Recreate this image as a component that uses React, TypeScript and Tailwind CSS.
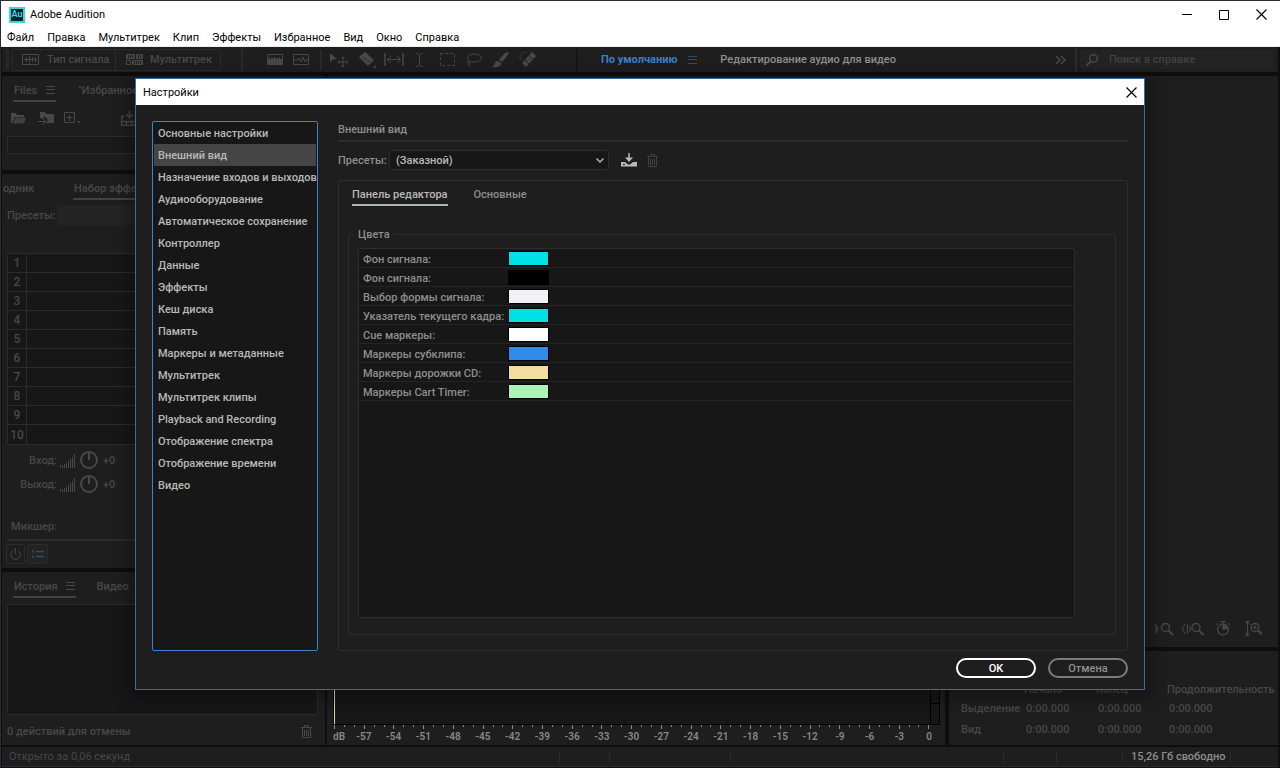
import { useState } from "react";
import type { ReactNode } from "react";
import clsx from "clsx";

const menuItems = ["Файл", "Правка", "Мультитрек", "Клип", "Эффекты", "Избранное", "Вид", "Окно", "Справка"];

const sections = [
  "Основные настройки",
  "Внешний вид",
  "Назначение входов и выходов",
  "Аудиооборудование",
  "Автоматическое сохранение",
  "Контроллер",
  "Данные",
  "Эффекты",
  "Кеш диска",
  "Память",
  "Маркеры и метаданные",
  "Мультитрек",
  "Мультитрек клипы",
  "Playback and Recording",
  "Отображение спектра",
  "Отображение времени",
  "Видео",
];

const colors = [
  { id: "wave", label: "Фон сигнала:", value: "#00e1e6" },
  { id: "wave-bg", label: "Фон сигнала:", value: "#000000" },
  { id: "selection", label: "Выбор формы сигнала:", value: "#f2f2f6" },
  { id: "playhead", label: "Указатель текущего кадра:", value: "#00e1e6" },
  { id: "cue", label: "Cue маркеры:", value: "#ffffff" },
  { id: "subclip", label: "Маркеры субклипа:", value: "#2f8ceb" },
  { id: "cd", label: "Маркеры дорожки CD:", value: "#f3dca2" },
  { id: "cart", label: "Маркеры Cart Timer:", value: "#adf3b6" },
];

const slots = [1, 2, 3, 4, 5, 6, 7, 8, 9, 10];
const levels = Array.from({ length: 20 }, (_, i) => -57 + i * 3);
const ticks = Array.from({ length: 61 }, (_, i) => i);

interface IconProps {
  w: number;
  h: number;
  className?: string;
  children: ReactNode;
}

function Icon({ w, h, className, children }: IconProps) {
  return (
    <svg width={w} height={h} viewBox={`0 0 ${w} ${h}`} fill="none" stroke="currentColor" className={clsx("shrink-0", className)} aria-hidden="true">
      {children}
    </svg>
  );
}

function Lines({ className }: { className?: string }) {
  return (
    <Icon w={9} h={8} className={className}>
      <path d="M0 .5h9M0 3.5h9M0 7.5h9" />
    </Icon>
  );
}

function Cross() {
  return (
    <Icon w={11} h={11}>
      <path d="M.5.5l10 10M10.5.5l-10 10" strokeWidth="1.2" />
    </Icon>
  );
}

function Trash() {
  return (
    <Icon w={11} h={13}>
      <path d="M0 2.5h11M3.5 2V.5h4V2M1.5 3v9.5h8V3M3.5 5v6M5.5 5v6M7.5 5v6" />
    </Icon>
  );
}

function WaveIcon() {
  return (
    <Icon w={17} h={11}>
      <path d="M.5.5h16v10H.5zM2 5.5h13M4.5 3v5M7.5 2v7M10.5 3v5M13.5 3v5" />
    </Icon>
  );
}

function MultitrackIcon() {
  return (
    <Icon w={17} h={11}>
      <path d="M.5.5h8v4h-8zM10.5.5h6v4h-6zM.5 6.5h4v4h-4zM6.5 6.5h10v4h-10z" />
      <path d="M1 2.5h8M11 2.5h5M7 8.5h9" strokeDasharray="1 1" strokeWidth="3" />
    </Icon>
  );
}

function Magnifier() {
  return (
    <Icon w={12} h={12}>
      <circle cx="7.5" cy="4.5" r="3.8" strokeWidth="1.5" />
      <path d="M4.8 7.2L.6 11.4" strokeWidth="2" />
    </Icon>
  );
}

function Bars() {
  return (
    <Icon w={15} h={15}>
      <path d="M.5 12v3M2.5 12v3M4.5 11v4M6.5 10v5M8.5 8v7M10.5 6v9M12.5 4v11M14.5 1v14" />
    </Icon>
  );
}

function Knob() {
  return (
    <Icon w={18} h={18}>
      <circle cx="9" cy="9" r="8" strokeWidth="2" />
      <path d="M9 2v7" strokeWidth="2" />
    </Icon>
  );
}

function TitleBar() {
  return (
    <header className="bg-white text-black">
      <div className="flex h-[27px] items-center pl-2">
        <div className="flex h-4 w-4 items-center justify-center border-2 border-[#3fd5dc] bg-[#08272b] text-[9px] leading-none font-semibold text-[#4fd8e4]">
          Au
        </div>
        <h1 className="ml-[5px]">Adobe Audition</h1>
        <div className="ml-auto flex items-center gap-[27px] pr-[13px]">
          <button type="button" aria-label="Свернуть">
            <Icon w={10} h={11}>
              <path d="M0 5.5h10" />
            </Icon>
          </button>
          <button type="button" aria-label="Развернуть">
            <Icon w={10} h={10}>
              <path d="M.5.5h9v9h-9z" />
            </Icon>
          </button>
          <button type="button" aria-label="Закрыть">
            <Cross />
          </button>
        </div>
      </div>
      <nav className="flex h-[19px] items-center gap-[13px] border-b border-[#eeeeee] pl-1.5">
        {menuItems.map((item) => (
          <button type="button" key={item}>
            {item}
          </button>
        ))}
      </nav>
    </header>
  );
}

function Toolbar() {
  return (
    <div className="flex h-[25px] items-center bg-[#1e1e1e] font-medium">
      <div className="ml-1 h-5 w-[3px] bg-[repeating-linear-gradient(#303030_0_1px,transparent_1px_2px)]" />
      <div className="ml-[3px] flex h-[22px] shrink-0 rounded-xs border border-[#2b2b2b]">
        <button type="button" className="flex w-[102px] items-center gap-2 pl-[9px] whitespace-nowrap">
          <WaveIcon />
          Тип сигнала
        </button>
        <button type="button" className="flex w-[105px] items-center gap-[7px] border-l border-[#2b2b2b] pl-[10px]">
          <MultitrackIcon />
          Мультитрек
        </button>
      </div>
      <div className="ml-[20px] h-full w-0.5 bg-[#2a2a2a]" />
      <div className="ml-[24px] flex items-center gap-[10px]">
        <Icon w={16} h={11}>
          <path d="M.5.5h15v10H.5z" />
          <path d="M1 5h14v5H1zM2 3h1v3H2zM4 4h2v2H4zM7 3h1v3H7zM9 4h2v2H9zM12 3h1v3h-1z" fill="currentColor" stroke="none" />
        </Icon>
        <Icon w={16} h={11}>
          <path d="M.5.5h15v10H.5zM1 6h4l1-2 2 4 2-5 2 5 1-2h2" />
        </Icon>
      </div>
      <div className="ml-[11px] h-[20px] w-0.5 bg-[#2a2a2a]" />
      <div className="ml-[8px] flex items-center gap-2">
        <Icon w={18} h={16}>
          <path d="M0 1l7 6-4 .5-3 3z" fill="currentColor" stroke="none" />
          <path d="M13 5v10M8 10h10M11.5 6.5l1.5-1.5 1.5 1.5M11.5 13.5l1.5 1.5 1.5-1.5M9.5 8.5L8 10l1.5 1.5M16.5 8.5L18 10l-1.5 1.5" />
        </Icon>
        <Icon w={18} h={17} className="ml-0.5">
          <path d="M1 6l6-5 9 8-6 6z" fill="currentColor" stroke="none" />
          <path d="M5 6l7 5" stroke="#1e1e1e" strokeDasharray="2 1" />
          <path d="M18 14v3h-3z" fill="currentColor" stroke="none" />
        </Icon>
        <Icon w={20} h={13}>
          <path d="M1 0v13M19 0v13" strokeWidth="1.5" />
          <path d="M3 6.5h14M7 3L3.5 6.5 7 10M13 3l3.5 3.5L13 10" />
        </Icon>
        <Icon w={12} h={14} className="ml-0.5">
          <path d="M2 .5c2 0 3.500.5 3.500 2v9c0 1.500-1.500 2-3.500 2M9 .5c-2 0-3.500.5-3.500 2M9 13.500c-2 0-3.500-.5-3.500-2" />
        </Icon>
        <Icon w={16} h={14} className="ml-1.5">
          <path d="M.5.5h14v12H.5z" strokeDasharray="3 2" />
        </Icon>
        <Icon w={16} h={14} className="ml-0.5">
          <ellipse cx="8.5" cy="5" rx="7" ry="4" />
          <path d="M3 8c-2 0-2.500 3 0 3 2 0 1-3-1-2M3 11c1 1 0 2 1 2.500" />
        </Icon>
        <Icon w={17} h={16} className="ml-0.5">
          <path d="M16 0c1 0 .5 2-1 4l-5 6-3-2 5-6c1-1 2.500-2 4-2zM6 9l3 2c1 3-4 5-9 4 3-1 2-6 6-6z" fill="currentColor" stroke="none" />
        </Icon>
        <Icon w={18} h={17} className="ml-0.5">
          <path d="M1 5.500C1 2 4 .5 8 1.500M1 6c0 2 .5 3 1.500 4" strokeDasharray="1 1" />
          <path d="M3 12L13 1l4 4L7 16z" fill="currentColor" stroke="none" />
          <path d="M6 9l4 4M10 4.500l4 4" stroke="#1e1e1e" />
          <path d="M9 9.500l3-3" stroke="#1e1e1e" strokeDasharray="1 1" />
        </Icon>
      </div>
      <div className="ml-[39px] h-full w-0.5 bg-[#151515]" />
      <button type="button" className="ml-[23px] font-bold whitespace-nowrap text-[#3a7fc8]">
        По умолчанию
      </button>
      <Lines className="ml-[11px] text-[#28506f]" />
      <button type="button" className="ml-[23px] whitespace-nowrap text-[#8e8e8e]">
        Редактирование аудио для видео
      </button>
      <button type="button" className="ml-auto" aria-label="Другие рабочие среды">
        <Icon w={11} h={8}>
          <path d="M1 0l4 4-4 4M6 0l4 4-4 4" strokeWidth="1.5" />
        </Icon>
      </button>
      <div className="ml-[9px] h-full w-0.5 bg-[#2b2b2b]" />
      <label className="mr-1 ml-[3px] flex h-[19px] w-[194px] items-center gap-[11px] rounded-xs bg-[#232323] pl-1.5">
        <Magnifier />
        <input
          type="search"
          aria-label="Поиск в справке"
          placeholder="Поиск в справке"
          className="w-full min-w-0 bg-transparent outline-none placeholder:text-[#424242]"
        />
      </label>
    </div>
  );
}

function FilesPanel() {
  return (
    <section className="h-[94px] overflow-hidden bg-[#1e1e1e] pt-1.5 pl-[5px]">
      <div className="flex gap-[22px] pl-1.5">
        <button type="button" className="flex h-5 items-center gap-[9px] border-b-2 border-[#424242] px-px pb-0.5">
          Files
          <Lines />
        </button>
        <button type="button" className="flex h-4 items-center whitespace-nowrap">
          "Избранное"
        </button>
      </div>
      <div className="mt-2 flex h-4 items-center gap-[11px] pl-1">
        <Icon w={16} h={12}>
          <path d="M0 11V1h5l1 2h7v2H4L1 11z" fill="currentColor" stroke="none" />
          <path d="M2 11l3-5.500h10L13 11.500H1.500z" fill="currentColor" stroke="none" opacity=".8" />
        </Icon>
        <Icon w={17} h={14}>
          <path d="M2 1h5l1 2h8v9H8l2-3-4-4v2H2z" fill="currentColor" stroke="none" />
          <path d="M0 10.500h7M4 7l4 3.500L4 14" />
        </Icon>
        <Icon w={17} h={13} className="-ml-0.5">
          <path d="M.5.5h10v10H.5zM5.500 3v6M2.500 5.500h6" />
          <path d="M13 9h4l-2 2.500z" fill="currentColor" stroke="none" />
        </Icon>
        <Icon w={16} h={15} className="ml-[29px]">
          <path d="M8.500 0v6M5 3.500l3.500 3 3.500-3M0 5.500h3M0 10.500h16M0 14.500h16M.5 5v9M5.500 10v4M10.500 10v4M15.500 5v9" strokeWidth="1.5" />
        </Icon>
      </div>
      <div className="mt-[10px] h-[18px] border border-[#2b2b2b] bg-[#1a1a1a]" />
    </section>
  );
}

function EffectsPanel() {
  return (
    <section className="h-[394px] overflow-hidden bg-[#1e1e1e] pl-[5px]">
      <div className="flex gap-[34px] pt-1.5">
        <button type="button" className="-ml-1 flex h-4 w-9 items-center">
          одник
        </button>
        <button type="button" className="flex h-5 items-center border-b-2 border-[#424242] px-px pb-0.5 whitespace-nowrap">
          Набор эффектов
        </button>
      </div>
      <div className="mt-[5px] flex h-5 items-center gap-1">
        <label htmlFor="rack-preset" className="w-[46px]">
          Пресеты:
        </label>
        <select id="rack-preset" className="h-5 w-[200px] appearance-none rounded-xs bg-[#242424]" />
      </div>
      <ol className="mt-7 mr-2 rounded-xs border border-[#2b2b2b] bg-[#171717] text-xs">
        {slots.map((slot) => (
          <li key={slot} className="flex h-[19px] border-b border-[#2b2b2b] last:border-b-0">
            <span className="flex w-[19px] items-center justify-center border-r border-[#2b2b2b]">{slot}</span>
          </li>
        ))}
      </ol>
      <div className="mt-[3px] grid">
        {["Вход:", "Выход:"].map((name) => (
          <div key={name} className="flex h-6 items-center">
            <span className="w-[50px] text-right">{name}</span>
            <span className="ml-[3px] flex items-center gap-[5px]">
              <Bars />
              <Knob />
              +0
            </span>
          </div>
        ))}
      </div>
      <div className="mt-5 flex h-5 items-center pl-1">Микшер:</div>
      <div className="mt-[3px] h-0.5 bg-[#2b2b2b]" />
      <div className="mt-[3px] flex gap-0.5">
        <button type="button" aria-label="Питание" className="-ml-px flex h-5 w-[19px] items-center justify-center rounded-xs border border-[#2b2b2b]">
          <Icon w={11} h={12}>
            <path d="M5.5 0v6M3 2.500a4.800 4.800 0 1 0 5 0" />
          </Icon>
        </button>
        <button type="button" aria-label="Список" className="flex h-5 w-[21px] items-center justify-center rounded-xs border border-[#2b2b2b] bg-[#232323] text-[#28506f]">
          <Icon w={12} h={8}>
            <path d="M1 0v2.500M1 5.500V8M4 1.500h8M4 6.500h8" strokeWidth="1.5" />
          </Icon>
        </button>
      </div>
    </section>
  );
}

function HistoryPanel() {
  return (
    <section className="h-[173px] overflow-hidden bg-[#1e1e1e] px-[5px] pt-1.5">
      <div className="flex gap-[21px] pl-1.5">
        <button type="button" className="flex h-5 items-center gap-2 border-b-2 border-[#424242] px-px pb-0.5">
          История
          <Lines />
        </button>
        <button type="button" className="flex h-4 items-center">
          Видео
        </button>
      </div>
      <div className="mt-1.5 mr-[2px] h-[111px] rounded-xs border border-[#2b2b2b] bg-[#171717]" />
      <div className="mt-2 mr-2 flex h-4 items-center justify-between">
        0 действий для отмены
        <button type="button" aria-label="Очистить историю">
          <Trash />
        </button>
      </div>
    </section>
  );
}

function EditorPanel() {
  return (
    <section className="flex h-[571px] items-end justify-end gap-2 bg-[#1e1e1e] pr-4 pb-[11px]">
      <Icon w={19} h={14}>
        <path d="M1 2v10M1 4l2 3-2 3" />
        <circle cx="10.5" cy="5.5" r="4" strokeWidth="1.3" />
        <path d="M13.5 8.5L18 13" strokeWidth="2" />
      </Icon>
      <Icon w={22} h={14}>
        <path d="M3 2L.5 7 3 12M5.500 2v10M7 4l2 3-2 3" />
        <circle cx="14" cy="5.5" r="4" strokeWidth="1.3" />
        <path d="M17 8.500L21.500 13" strokeWidth="2" />
      </Icon>
      <Icon w={14} h={15} className="ml-1">
        <circle cx="7" cy="8.5" r="5.5" strokeWidth="1.3" />
        <path d="M7 8.500V0M4 .5h6M7 8.500L11 5" />
        <path d="M7 4v4.500h4.500A4.500 4.500 0 0 0 7 4z" fill="currentColor" stroke="none" />
        <path d="M12 2l2 2M2 2L0 4" />
      </Icon>
      <Icon w={17} h={15} className="ml-[7px]">
        <path d="M0 .5h5M2.500 1v13M0 14.500h5M.5 3.500l2-2 2 2M.5 11.500l2 2 2-2" />
        <circle cx="10" cy="6.5" r="4" strokeWidth="1.3" />
        <path d="M13 9.500l4 4" strokeWidth="2" />
        <path d="M8 6.500h4M10 4.500v4" />
      </Icon>
    </section>
  );
}

function LevelsPanel() {
  return (
    <section className="flex-1 bg-[#1e1e1e] text-[10px] leading-4 font-semibold text-[#878787]">
      <div className="mt-[39px] mr-[5px] ml-1.5 flex h-[35px] border-b border-l border-black bg-[#171717]">
        <div className="w-px bg-[#e6d9a5]" />
        <div className="flex-1" />
        <div className="flex w-[10px] flex-col border-x border-black">
          <div className="h-[14px] border-b border-black" />
        </div>
      </div>
      <div className="mr-[15px] ml-[7px] flex h-1 justify-between">
        {ticks.map((tick) => (
          <span key={tick} className={clsx("w-px bg-[#878787]", tick % 3 === 0 ? "h-1" : "h-0.5")} />
        ))}
      </div>
      <div className="mr-px flex h-4 items-center">
        <span className="w-[22px] pl-1.5">dB</span>
        {levels.map((level) => (
          <span key={level} className="w-0 flex-1 text-center">
            {level}
          </span>
        ))}
      </div>
    </section>
  );
}

function SelectionPanel() {
  return (
    <section className="w-[329px] bg-[#1e1e1e] pt-[30px] pl-3">
      <table className="w-full table-fixed text-left whitespace-nowrap">
        <thead>
          <tr className="h-[17px]">
            <th className="w-[63px]" />
            <th className="w-[72px] font-medium">Начало</th>
            <th className="w-[71px] font-medium">Конец</th>
            <th className="font-medium">Продолжительность</th>
          </tr>
        </thead>
        <tbody>
          {["Выделение", "Вид"].map((name) => (
            <tr key={name} className="h-[21px]">
              <th className="font-medium">{name}</th>
              <td className="pl-0.5">0:00.000</td>
              <td className="pl-0.5">0:00.000</td>
              <td className="pl-0.5">0:00.000</td>
            </tr>
          ))}
        </tbody>
      </table>
    </section>
  );
}

function StatusBar() {
  return (
    <footer className="flex h-5 items-center border-b border-[#2b2b30] bg-[#1e1e1e] pl-[7px]">
      <span className="flex-1">Открыто за 0,06 секунд</span>
      <div className="flex h-3 w-[50px] border-l border-[#2b2b2b]" />
      <div className="flex h-3 w-[121px] border-l border-[#2b2b2b]" />
      <div className="flex h-3 w-[273px] border-l border-[#2b2b2b]" />
      <div className="flex h-3 w-[53px] border-l border-[#2b2b2b]" />
      <div className="flex h-3 w-[66px] border-l border-[#2b2b2b]" />
      <div className="flex h-3 w-[108px] items-center border-l border-[#2b2b2b] pl-2 font-medium whitespace-nowrap text-[#8e8e8e]">15,26 Гб свободно</div>
      <div className="flex h-3 w-12 border-l border-[#2b2b2b]" />
    </footer>
  );
}

function ColorsGroup() {
  return (
    <fieldset className="mt-5 mr-[11px] mb-[15px] ml-[9px] flex-1 rounded-xs border border-[#2d2d2d] pr-10 pb-4 pl-[9px]">
      <legend className="-ml-1 h-4 px-1 leading-[18px]">Цвета</legend>
      <div className="mt-1.5 h-[370px] rounded-xs border border-[#2d2d2d] bg-[#171717]">
        {colors.map((color) => (
          <div key={color.id} className="flex h-[19px] items-center border-b border-[#242424] pl-1">
            <label htmlFor={color.id} className="w-[145px] pt-0.5 whitespace-nowrap">
              {color.label}
            </label>
            <input
              id={color.id}
              type="color"
              defaultValue={color.value}
              className="h-[15px] w-[41px] appearance-none border border-black bg-black p-0 [&::-webkit-color-swatch]:rounded-none [&::-webkit-color-swatch]:border-0 [&::-webkit-color-swatch-wrapper]:p-0"
            />
          </div>
        ))}
      </div>
    </fieldset>
  );
}

function SettingsDialog() {
  const [section, setSection] = useState("Внешний вид");
  const [tab, setTab] = useState("Панель редактора");

  return (
    <div
      role="dialog"
      aria-labelledby="settings-title"
      className="w-[1010px] border border-[#376ca5] bg-[#1e1e1e] font-medium text-[#8e8e8e] shadow-[0_4px_12px_8px_rgba(0,0,0,0.25)]"
    >
      <div className="flex h-[26px] items-center justify-between bg-white pr-[7px] pl-[7px] font-normal text-black">
        <h2 id="settings-title">Настройки</h2>
        <button type="button" aria-label="Закрыть настройки">
          <Cross />
        </button>
      </div>
      <div className="flex gap-5 px-4 pt-4">
        <ul className="min-h-[530px] w-[166px] rounded-xs border border-[#3f82cc] bg-[#171717] text-[#b9b9b9]">
          {sections.map((name) => (
            <li key={name}>
              <button
                type="button"
                onClick={() => setSection(name)}
                className={clsx(
                  "flex h-[22px] w-full items-center whitespace-nowrap",
                  name === section ? "border-x border-[#171717] bg-[#454545] pl-1" : "pl-[5px]",
                )}
              >
                {name}
              </button>
            </li>
          ))}
        </ul>
        <div className="flex flex-1 flex-col">
          <h3 className="flex h-[21px] items-center border-b-2 border-[#2b2b2b] pb-0.5">{section}</h3>
          <div className="mt-2 flex h-5 items-center">
            <label htmlFor="preset" className="w-[51px]">
              Пресеты:
            </label>
            <div className="relative">
              <select
                id="preset"
                className="h-5 w-[220px] appearance-none rounded-xs border border-[#2d2d2d] bg-[#171717] px-1.5 text-[#b9b9b9]"
              >
                <option>(Заказной)</option>
              </select>
              <Icon w={8} h={5} className="pointer-events-none absolute top-2 right-[5px] text-[#b9b9b9]">
                <path d="M.5.5l3.500 3.500L7.500.5" strokeWidth="1.3" />
              </Icon>
            </div>
            <button type="button" aria-label="Сохранить пресет" className="ml-3 text-[#b9b9b9]">
              <Icon w={16} h={14}>
                <path d="M8 0v8" strokeWidth="1.5" />
                <path d="M4 4.500h8L8 9zM0 9h4l3 2.500h2L12 9h4v4.500H0z" fill="currentColor" stroke="none" />
                <path d="M2 11.500h2" stroke="#1e1e1e" />
              </Icon>
            </button>
            <button type="button" aria-label="Удалить пресет" className="ml-[10px] text-[#404040]">
              <Trash />
            </button>
          </div>
          <div className="mt-[10px] flex flex-1 flex-col rounded-xs border border-[#2d2d2d]">
            <div role="tablist" className="flex gap-[26px] pt-1 pl-[13px]">
              {["Панель редактора", "Основные"].map((name) => (
                <button
                  type="button"
                  role="tab"
                  key={name}
                  aria-selected={name === tab}
                  onClick={() => setTab(name)}
                  className={clsx(
                    "flex h-[21px] items-center border-b-2",
                    name === tab ? "border-[#aab6ae] text-[#b9b9b9]" : "border-transparent",
                  )}
                >
                  {name}
                </button>
              ))}
            </div>
            <ColorsGroup />
          </div>
        </div>
      </div>
      <div className="flex justify-end gap-3 px-4 pt-[7px] pb-[11px]">
        <button type="button" className="h-5 w-20 rounded-full border-2 border-white text-white">
          OK
        </button>
        <button type="button" className="h-5 w-20 rounded-full border-2 border-[#7c7c7c]">
          Отмена
        </button>
      </div>
    </div>
  );
}

export default function App() {
  return (
    <div className="relative min-h-screen border-t border-l border-[#2b2b33] bg-[#0e0e0e] font-['Roboto','Noto_Sans',sans-serif] text-[11px] leading-[17px] text-[#484848]">
      <TitleBar />
      <div className="mr-0.5 ml-px flex flex-col">
        <Toolbar />
        <main className="mt-1 flex gap-0.5 font-medium">
          <div className="flex w-[323px] shrink-0 flex-col gap-1">
            <FilesPanel />
            <EffectsPanel />
            <HistoryPanel />
          </div>
          <div className="flex min-w-0 flex-1 flex-col gap-1">
            <EditorPanel />
            <div className="flex flex-1 gap-1">
              <LevelsPanel />
              <SelectionPanel />
            </div>
          </div>
        </main>
        <div className="mt-0.5">
          <StatusBar />
        </div>
      </div>
      <div className="absolute top-[77px] right-0 -left-px flex justify-center">
        <SettingsDialog />
      </div>
    </div>
  );
}
